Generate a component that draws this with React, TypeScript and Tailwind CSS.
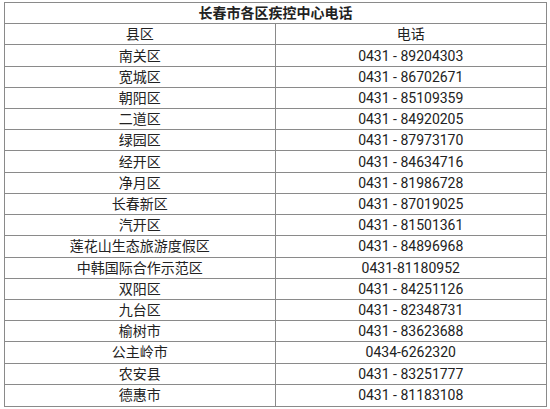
import React from "react";

const rows: [string, string][] = [
  ["南关区", "0431 - 89204303"],
  ["宽城区", "0431 - 86702671"],
  ["朝阳区", "0431 - 85109359"],
  ["二道区", "0431 - 84920205"],
  ["绿园区", "0431 - 87973170"],
  ["经开区", "0431 - 84634716"],
  ["净月区", "0431 - 81986728"],
  ["长春新区", "0431 - 87019025"],
  ["汽开区", "0431 - 81501361"],
  ["莲花山生态旅游度假区", "0431 - 84896968"],
  ["中韩国际合作示范区", "0431-81180952"],
  ["双阳区", "0431 - 84251126"],
  ["九台区", "0431 - 82348731"],
  ["榆树市", "0431 - 83623688"],
  ["公主岭市", "0434-6262320"],
  ["农安县", "0431 - 83251777"],
  ["德惠市", "0431 - 81183108"],
];

export default function App() {
  return (
    <div
      className="w-[550px] h-[409px] bg-white pt-[2px] pl-[4px] text-[#222] text-[14px]"
      style={{ fontFamily: 'Roboto, "Noto Sans CJK SC", sans-serif' }}
    >
      <div className="w-[543px] h-[405px] border border-[#8a8a8a] grid grid-cols-2 grid-rows-[repeat(19,1fr)]">
        <div className="col-span-2 flex items-center justify-center font-bold border-b border-[#8a8a8a] leading-none">
          长春市各区疾控中心电话
        </div>
        <div className="flex items-center justify-center border-b border-r border-[#8a8a8a] leading-none">县区</div>
        <div className="flex items-center justify-center border-b border-[#8a8a8a] leading-none">电话</div>
        {rows.map(([a, b], i) => (
          <React.Fragment key={i}>
            <div
              className={
                "flex items-center justify-center border-r border-[#8a8a8a] leading-none " +
                (i < rows.length - 1 ? "border-b" : "")
              }
            >
              {a}
            </div>
            <div
              className={
                "flex items-center justify-center border-[#8a8a8a] leading-none " +
                (i < rows.length - 1 ? "border-b" : "")
              }
            >
              {b}
            </div>
          </React.Fragment>
        ))}
      </div>
    </div>
  );
}
